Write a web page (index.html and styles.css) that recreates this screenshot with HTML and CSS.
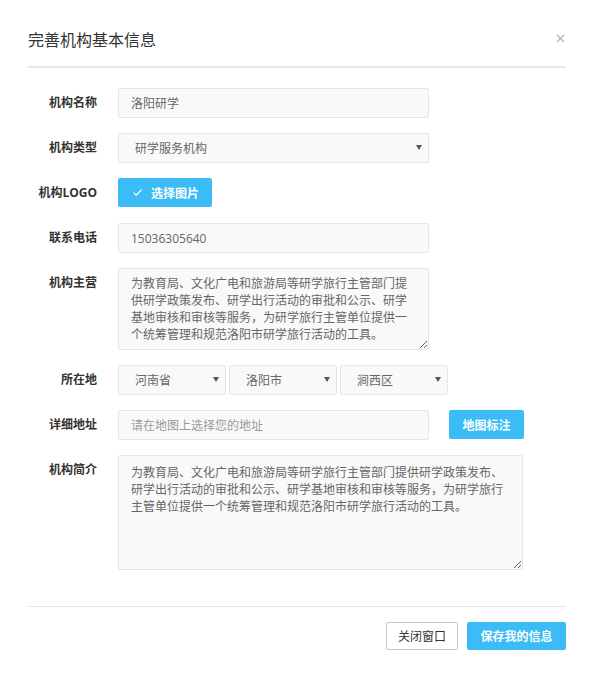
FILE: index.html
```html
<!DOCTYPE html>
<html lang="zh-CN">
<head>
    <meta charset="UTF-8">
    <meta name="viewport" content="width=device-width, initial-scale=1.0">
    <title>完善机构基本信息</title>
    <link rel="stylesheet" href="styles.css">
</head>
<body>
    <div class="dialog">
        <div class="dialog-header">
            <span class="dialog-title">完善机构基本信息</span>
            <a class="dialog-close" href="#">
                <svg width="9" height="9" viewBox="0 0 9 9"><path d="M1 1L8 8M8 1L1 8" stroke="#bbb" stroke-width="1.6"/></svg>
            </a>
        </div>

        <form class="form">
            <div class="form-row">
                <label class="form-label">机构名称</label>
                <input class="form-input" type="text" value="洛阳研学">
            </div>

            <div class="form-row">
                <label class="form-label">机构类型</label>
                <span class="select select-wide">
                    <select><option>研学服务机构</option></select>
                </span>
            </div>

            <div class="form-row">
                <label class="form-label">机构LOGO</label>
                <button type="button" class="btn btn-primary btn-upload">
                    <svg width="9" height="7" viewBox="0 0 9 7"><path d="M0.6 3.6L3.2 6.1L8.4 0.7" fill="none" stroke="#fff" stroke-width="1.3"/></svg>
                    选择图片
                </button>
            </div>

            <div class="form-row">
                <label class="form-label">联系电话</label>
                <input class="form-input" type="text" value="15036305640">
            </div>

            <div class="form-row">
                <label class="form-label">机构主营</label>
                <textarea class="form-textarea textarea-main">为教育局、文化广电和旅游局等研学旅行主管部门提供研学政策发布、研学出行活动的审批和公示、研学基地审核和审核等服务，为研学旅行主管单位提供一个统筹管理和规范洛阳市研学旅行活动的工具。</textarea>
            </div>

            <div class="form-row">
                <label class="form-label">所在地</label>
                <div class="region">
                    <span class="select"><select><option>河南省</option></select></span>
                    <span class="select"><select><option>洛阳市</option></select></span>
                    <span class="select"><select><option>涧西区</option></select></span>
                </div>
            </div>

            <div class="form-row">
                <label class="form-label">详细地址</label>
                <input class="form-input" type="text" placeholder="请在地图上选择您的地址">
                <button type="button" class="btn btn-primary btn-map">地图标注</button>
            </div>

            <div class="form-row">
                <label class="form-label">机构简介</label>
                <textarea class="form-textarea textarea-intro">为教育局、文化广电和旅游局等研学旅行主管部门提供研学政策发布、研学出行活动的审批和公示、研学基地审核和审核等服务，为研学旅行主管单位提供一个统筹管理和规范洛阳市研学旅行活动的工具。</textarea>
            </div>
        </form>

        <div class="dialog-footer">
            <button type="button" class="btn btn-default">关闭窗口</button>
            <button type="button" class="btn btn-primary btn-save">保存我的信息</button>
        </div>
    </div>
</body>
</html>
```

FILE: styles.css
```css
/* General */
body {
    margin: 0;
    background: #ffffff;
    font-family: 'Open Sans', 'Noto Sans CJK SC', sans-serif;
    font-size: 12px;
    color: #333333;
}

input, select, textarea, button {
    font: inherit;
}

/* Dialog */
.dialog {
    padding: 0 29px 0 28px;
}

.dialog-header {
    display: flex;
    justify-content: space-between;
    align-items: center;
    padding: 30px 0 16px;
    border-bottom: 2px solid #e8e8e8;
}

.dialog-title {
    font-size: 16px;
    line-height: 20px;
    color: #333333;
}

.dialog-close {
    display: flex;
    margin: -4px 1px 0 0;
}

/* Form */
.form {
    padding: 20px 0 36px;
}

.form-row {
    display: flex;
    align-items: flex-start;
    margin-bottom: 15px;
}

.form-row:last-child {
    margin-bottom: 0;
}

.form-label {
    width: 69px;
    margin-right: 21px;
    text-align: right;
    font-weight: bold;
    line-height: 30px;
    color: #333333;
    white-space: nowrap;
}

.form-input,
.form-textarea,
.select select {
    box-sizing: border-box;
    border: 1px solid #e6e6e6;
    border-radius: 2px;
    background: #f9f9f9;
    color: #666666;
    outline: none;
}

.form-input {
    width: 311px;
    height: 30px;
    padding: 0 12px;
}

.form-input::placeholder {
    color: #999999;
}

.form-textarea {
    display: block;
    padding: 6px 12px 0;
    line-height: 17px;
}

.textarea-main {
    width: 311px;
    height: 82px;
}

.textarea-intro {
    width: 405px;
    height: 115px;
    padding-top: 8px;
}

/* Select */
.select {
    position: relative;
    display: block;
}

.select select {
    appearance: none;
    -webkit-appearance: none;
    width: 108px;
    height: 30px;
    padding: 0 20px 0 16px;
}

.select-wide select {
    width: 311px;
}

.select::after {
    content: '';
    position: absolute;
    right: 7px;
    top: 12px;
    border-left: 3px solid transparent;
    border-right: 3px solid transparent;
    border-top: 5px solid #555555;
}

.region {
    display: flex;
    gap: 3px;
}

/* Buttons */
.btn {
    box-sizing: border-box;
    height: 29px;
    border-radius: 2px;
    cursor: pointer;
    white-space: nowrap;
}

.btn-primary {
    border: none;
    background: #3bbcf6;
    color: #ffffff;
    font-weight: bold;
}

.btn-default {
    height: 28px;
    border: 1px solid #c9c9c9;
    background: #ffffff;
    color: #333333;
    padding: 0 11px;
}

.btn-upload {
    display: flex;
    align-items: center;
    gap: 9px;
    width: 94px;
    padding: 0 0 0 15px;
}

.btn-map {
    width: 75px;
    margin-left: 20px;
    padding: 0;
}

.btn-save {
    width: 99px;
    height: 28px;
    padding: 0;
}

/* Footer */
.dialog-footer {
    display: flex;
    justify-content: flex-end;
    gap: 9px;
    padding-top: 15px;
    border-top: 1px solid #e5e5e5;
}
```
